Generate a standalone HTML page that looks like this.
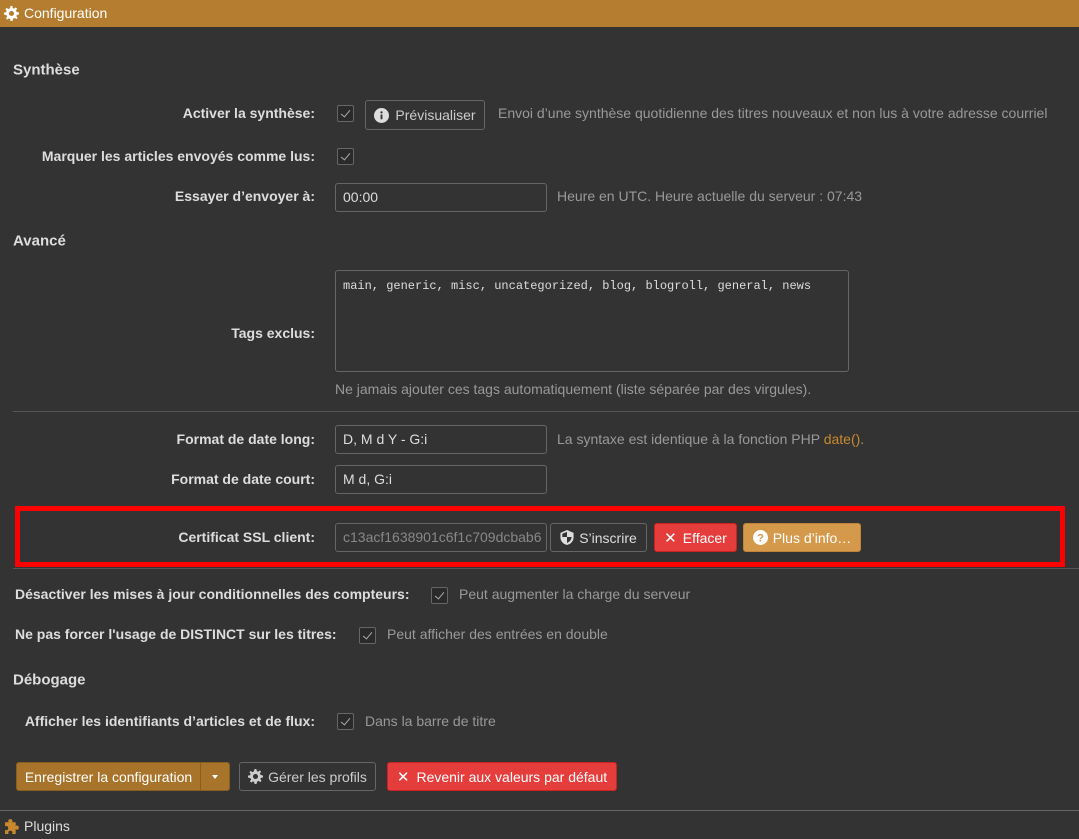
<!DOCTYPE html>
<html><head><meta charset="utf-8"><style>
*{box-sizing:border-box;margin:0;padding:0}
body{width:1079px;height:839px;background:#333;font-family:"Liberation Sans",sans-serif;font-size:14px;color:#ccc;position:relative;overflow:hidden}
.a{position:absolute;white-space:nowrap}
.lbl{position:absolute;right:764px;font-weight:bold;color:#ddd;white-space:nowrap;transform:translateY(-50%)}
.lft{position:absolute;left:15px;font-weight:bold;color:#ddd;white-space:nowrap;transform:translateY(-50%)}
.h{position:absolute;color:#999;white-space:nowrap;transform:translateY(-50%)}
.sec{position:absolute;left:13px;font-weight:bold;font-size:15px;color:#ddd;transform:translateY(-50%)}
.cb{position:absolute;width:17px;height:17px;border:1px solid #666;border-radius:2px;background:#2a2a2a}
.cb:after{content:"";position:absolute;left:5px;top:2px;width:4px;height:8px;border:solid #aaa;border-width:0 1px 1px 0;transform:rotate(40deg)}
.in{position:absolute;border:1px solid #666;border-radius:3px;background:#333;color:#ddd;padding-left:7px;display:flex;align-items:center;padding-bottom:1px}
.btn{position:absolute;border:1px solid #666;border-radius:3px;display:flex;align-items:center;justify-content:center;color:#ccc}
.hr{position:absolute;height:1px;background:#555}
</style></head><body>
<div class="a" style="left:0;top:0;width:1079px;height:27px;background:#b57d2f"></div>
<svg class="a" style="left:4px;top:6px" width="15" height="15" viewBox="0 0 16 16"><path fill="#fff" d="M7 0h2l.4 2.2 1.4.6 1.8-1.3 1.4 1.4-1.3 1.8.6 1.4L16 7v2l-2.2.4-.6 1.4 1.3 1.8-1.4 1.4-1.8-1.3-1.4.6L9 16H7l-.4-2.2-1.4-.6-1.8 1.3-1.4-1.4 1.3-1.8-.6-1.4L0 9V7l2.2-.4.6-1.4-1.3-1.8 1.4-1.4 1.8 1.3 1.4-.6z M8 5.3A2.7 2.7 0 1 0 8 10.7 2.7 2.7 0 1 0 8 5.3z"/></svg>
<div class="a" style="left:24px;top:5px;color:#fff;font-size:14px">Configuration</div>

<div class="sec" style="top:70px">Synthèse</div>
<div class="lbl" style="top:113px">Activer la synthèse:</div>
<div class="cb" style="left:337px;top:105px"></div>
<div class="btn" style="left:365px;top:100px;width:120px;height:30px"><svg width="15" height="15" viewBox="0 0 16 16" style="margin-right:6px"><circle cx="8" cy="8" r="8" fill="#ddd"/><rect x="7" y="7" width="2" height="5" fill="#333"/><circle cx="8" cy="4.6" r="1.2" fill="#333"/></svg>Prévisualiser</div>
<div class="h" style="left:498px;top:113px">Envoi d’une synthèse quotidienne des titres nouveaux et non lus à votre adresse courriel</div>
<div class="lbl" style="top:156px">Marquer les articles envoyés comme lus:</div>
<div class="cb" style="left:337px;top:148px"></div>
<div class="lbl" style="top:196px">Essayer d’envoyer à:</div>
<div class="in" style="left:335px;top:183px;width:212px;height:29px">00:00</div>
<div class="h" style="left:557px;top:196px">Heure en UTC. Heure actuelle du serveur : 07:43</div>

<div class="sec" style="top:241px">Avancé</div>
<div class="lbl" style="top:333px">Tags exclus:</div>
<div class="in" style="left:335px;top:270px;width:514px;height:102px;align-items:flex-start;padding-top:8px;font-family:'Liberation Mono',monospace;font-size:12px">main, generic, misc, uncategorized, blog, blogroll, general, news</div>
<div class="h" style="left:335px;top:389px">Ne jamais ajouter ces tags automatiquement (liste séparée par des virgules).</div>
<div class="hr" style="left:13px;top:411px;width:1066px"></div>
<div class="lbl" style="top:439px">Format de date long:</div>
<div class="in" style="left:335px;top:425px;width:212px;height:29px">D, M d Y - G:i</div>
<div class="h" style="left:557px;top:439px">La syntaxe est identique à la fonction PHP <span style="color:#c8892e">date()</span>.</div>
<div class="lbl" style="top:479px">Format de date court:</div>
<div class="in" style="left:335px;top:465px;width:212px;height:29px">M d, G:i</div>

<div class="a" style="left:15px;top:506px;width:1050px;height:61px;border:5px solid #f00"></div>
<div class="hr" style="left:13px;top:568px;width:1066px"></div>
<div class="lbl" style="top:537px">Certificat SSL client:</div>
<div class="in" style="left:335px;top:523px;width:212px;height:29px;color:#888;overflow:hidden">c13acf1638901c6f1c709dcbab6</div>
<div class="btn" style="left:550px;top:523px;width:97px;height:29px;color:#ddd"><svg width="14" height="15" viewBox="0 0 14 16" style="margin-right:5px"><path fill="#ddd" d="M7 0L0 3v5c0 4 3 7 7 8 4-1 7-4 7-8V3z"/><path fill="#333" d="M7 2L2 4v3.5h5zM7 7.5v6.3c2.6-.9 4.7-3.2 4.9-6.3z"/></svg>S’inscrire</div>
<div class="btn" style="left:654px;top:523px;width:83px;height:29px;background:#e53c3c;border-color:#c22;color:#fff"><span style="margin-right:6px;font-size:15px">✕</span>Effacer</div>
<div class="btn" style="left:743px;top:523px;width:118px;height:29px;background:#d4994a;border-color:#c08538;color:#fff"><svg width="15" height="15" viewBox="0 0 16 16" style="margin-right:5px"><circle cx="8" cy="8" r="8" fill="#fff"/><text x="8" y="12.5" text-anchor="middle" font-size="12" font-weight="bold" fill="#d4994a" font-family="Liberation Sans">?</text></svg>Plus d’info…</div>

<div class="lft" style="top:594px">Désactiver les mises à jour conditionnelles des compteurs:</div>
<div class="cb" style="left:431px;top:587px"></div>
<div class="h" style="left:459px;top:594px">Peut augmenter la charge du serveur</div>
<div class="lft" style="top:634px">Ne pas forcer l'usage de DISTINCT sur les titres:</div>
<div class="cb" style="left:359px;top:627px"></div>
<div class="h" style="left:387px;top:634px">Peut afficher des entrées en double</div>

<div class="sec" style="top:680px">Débogage</div>
<div class="lbl" style="top:721px">Afficher les identifiants d’articles et de flux:</div>
<div class="cb" style="left:337px;top:713px"></div>
<div class="h" style="left:365px;top:721px">Dans la barre de titre</div>

<div class="btn" style="left:16px;top:762px;width:185px;height:29px;background:#a8732a;border-color:#8a5e20;color:#fff;border-radius:3px 0 0 3px">Enregistrer la configuration</div>
<div class="btn" style="left:200px;top:762px;width:30px;height:29px;background:#a8732a;border-color:#8a5e20;color:#fff;border-radius:0 3px 3px 0"><span style="border-top:4px solid #fff;border-left:3px solid transparent;border-right:3px solid transparent;width:0;height:0"></span></div>
<div class="btn" style="left:239px;top:762px;width:137px;height:29px"><svg width="15" height="15" viewBox="0 0 16 16" style="margin-right:5px"><path fill="#ccc" d="M7 0h2l.4 2.2 1.4.6 1.8-1.3 1.4 1.4-1.3 1.8.6 1.4L16 7v2l-2.2.4-.6 1.4 1.3 1.8-1.4 1.4-1.8-1.3-1.4.6L9 16H7l-.4-2.2-1.4-.6-1.8 1.3-1.4-1.4 1.3-1.8-.6-1.4L0 9V7l2.2-.4.6-1.4-1.3-1.8 1.4-1.4 1.8 1.3 1.4-.6z M8 5.3A2.7 2.7 0 1 0 8 10.7 2.7 2.7 0 1 0 8 5.3z"/></svg>Gérer les profils</div>
<div class="btn" style="left:387px;top:762px;width:230px;height:29px;background:#e53c3c;border-color:#c22;color:#fff"><span style="margin-right:7px;font-size:15px">✕</span>Revenir aux valeurs par défaut</div>

<div class="hr" style="left:0;top:810px;width:1079px;background:#666"></div>
<svg class="a" style="left:4px;top:818px" width="17" height="17" viewBox="0 0 16 16"><path fill="#c8892e" d="M6 1c1.2 0 2 .8 2 1.8 0 .5-.3.9-.5 1.2H11v3.5c.3-.2.7-.5 1.2-.5 1 0 1.8.8 1.8 2s-.8 2-1.8 2c-.5 0-.9-.3-1.2-.5V15H7.5c.2-.3.5-.7.5-1.2 0-1-.8-1.8-2-1.8s-2 .8-2 1.8c0 .5.3.9.5 1.2H1v-4c.3.2.7.5 1.2.5 1 0 1.8-.8 1.8-2S3.2 7.5 2.2 7.5c-.5 0-.9.3-1.2.5V4h3.5C4.3 3.7 4 3.3 4 2.8 4 1.8 4.8 1 6 1z"/></svg>
<div class="a" style="left:24px;top:818px;color:#ddd">Plugins</div>
</body></html>
